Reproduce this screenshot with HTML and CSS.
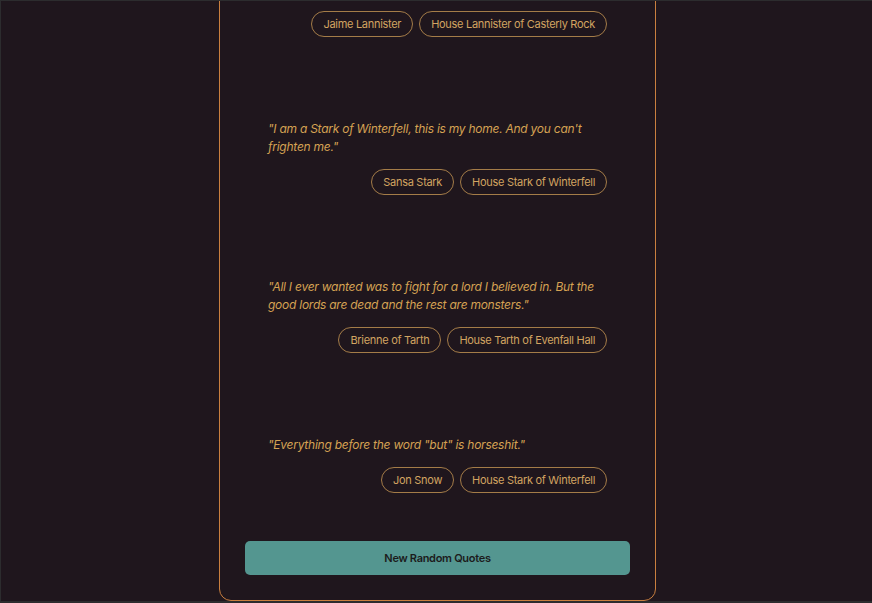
FILE: index.html
```html
<!DOCTYPE html>
<html lang="en">
<head>
<meta charset="utf-8">
<title>Game of Thrones Quotes</title>
<link rel="stylesheet" href="styles.css">
</head>
<body>
<div class="page">
  <main class="card">
    <section class="quotes">
      <article class="quote">
        <p class="quote-text">"The things I do for love."</p>
        <div class="tags">
          <span class="tag">Jaime Lannister</span>
          <span class="tag">House Lannister of Casterly Rock</span>
        </div>
      </article>
      <article class="quote">
        <p class="quote-text">"I am a Stark of Winterfell, this is my home. And you can't frighten me."</p>
        <div class="tags">
          <span class="tag">Sansa Stark</span>
          <span class="tag">House Stark of Winterfell</span>
        </div>
      </article>
      <article class="quote">
        <p class="quote-text">"All I ever wanted was to fight for a lord I believed in. But the good lords are dead and the rest are monsters."</p>
        <div class="tags">
          <span class="tag">Brienne of Tarth</span>
          <span class="tag">House Tarth of Evenfall Hall</span>
        </div>
      </article>
      <article class="quote">
        <p class="quote-text">"Everything before the word "but" is horseshit."</p>
        <div class="tags">
          <span class="tag">Jon Snow</span>
          <span class="tag">House Stark of Winterfell</span>
        </div>
      </article>
    </section>
    <button class="new-btn" type="button">New Random Quotes</button>
  </main>
</div>
</body>
</html>
```
FILE: styles.css
```css
html {
  background: #2c2c2e;
}
body {
  margin: 0;
  font-family: Inter, "Noto Sans", sans-serif;
}
.page {
  margin: 1px 0 2px 1px;
  height: 600px;
  background: #1f161d;
  overflow: hidden;
  display: flex;
  flex-direction: column;
  align-items: center;
  justify-content: flex-end;
}
.card {
  width: 385px;
  padding: 25px;
  border: 1px solid #c97f3f;
  border-radius: 12px;
  margin-left: 217px;
  margin-right: 215px;
  box-sizing: content-box;
  flex-shrink: 0;
}
.quotes {
  display: flex;
  flex-direction: column;
  gap: 83px;
}
.quote {
  padding: 0 23px;
  display: flex;
  flex-direction: column;
  gap: 13px;
}
.quote-text {
  margin: 0;
  font-size: 12px;
  line-height: 18px;
  letter-spacing: -0.25px;
  font-style: italic;
  color: #d5a253;
}
.tags {
  display: flex;
  justify-content: flex-end;
  gap: 6px;
}
.tag {
  font-size: 11px;
  line-height: 16px;
  letter-spacing: -0.3px;
  padding: 4px 11px;
  border: 1px solid #a47c48;
  border-radius: 13px;
  color: #d2a461;
}
.new-btn {
  display: block;
  width: 100%;
  height: 34px;
  margin-top: 48px;
  border: none;
  border-radius: 5px;
  background: #549690;
  color: #1c1c1c;
  font-family: Inter, "Noto Sans", sans-serif;
  font-size: 11px;
  font-weight: 600;
  letter-spacing: -0.3px;
  cursor: pointer;
}
```
